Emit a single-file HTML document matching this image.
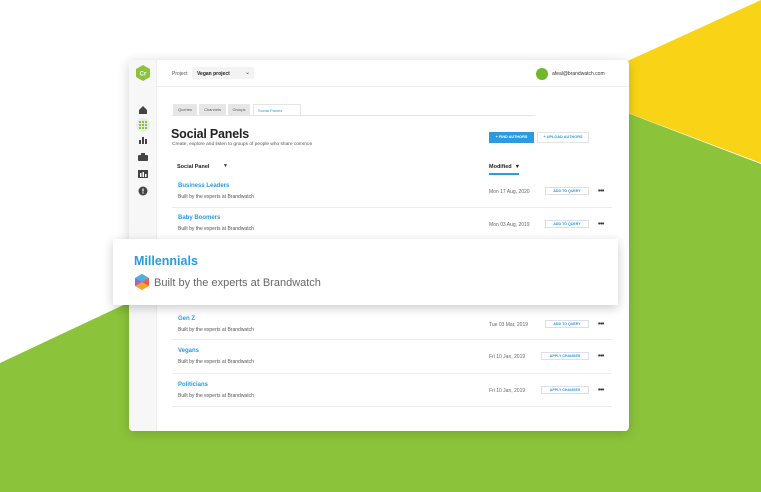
<!DOCTYPE html>
<html><head><meta charset="utf-8"><style>
*{margin:0;padding:0;box-sizing:border-box}
body{width:761px;height:492px;overflow:hidden;position:relative;background:#fff;font-family:"Liberation Sans",sans-serif}
.abs{position:absolute}
.card{left:129px;top:60px;width:500px;height:371px;background:#fff;border-radius:4px;box-shadow:0 2px 12px rgba(0,0,0,.18);overflow:hidden}
.side{left:0;top:0;width:28px;height:371px;background:#f7f7f7;border-right:1px solid #eee}
.hdr{left:28px;top:0;width:472px;height:27px;border-bottom:1px solid #eee}
.t{position:absolute;white-space:nowrap}
.link{color:#2a9be0;font-size:6px;font-weight:bold}
.sub{color:#555;font-size:5px}
.date{color:#666;font-size:5px}
.btn{position:absolute;height:8px;border:1px solid #dde;color:#2a9be0;font-size:3.6px;font-weight:bold;text-align:center;line-height:6px;background:#fff}
.dots{position:absolute;font-size:7px;color:#333;letter-spacing:-.5px;font-weight:bold}
.div{position:absolute;left:43px;width:440px;height:1px;background:#eee}
.tab{position:absolute;top:44px;height:11px;background:#e6e6e6;font-size:4px;color:#555;line-height:11px;text-align:center;border-radius:1px}
</style></head><body>
<svg class="abs" style="left:0;top:0" width="761" height="492">
<polygon points="761,0 575,85 575,93 761,163" fill="#f9d416"/>
<polygon points="0,363 575,93 761,164 761,492 0,492" fill="#8bc43a"/>
</svg>
<div class="abs card">
 <div class="abs side">
  <svg width="28" height="150" class="abs" style="left:0;top:0">
   <polygon points="14,5 21,9 21,17 14,21 7,17 7,9" fill="#8bc43a"/>
   <text x="14" y="15.5" font-size="6" fill="#fff" text-anchor="middle" font-family="Liberation Sans" font-weight="bold">Cr</text>
   <path d="M10,50 L14,46 L18,50 L18,54 L10,54 Z" fill="#444"/>
   <circle cx="14" cy="65" r="7" fill="#ebebeb"/>
   <g fill="#8bc43a"><rect x="10" y="61" width="2" height="2"/><rect x="13" y="61" width="2" height="2"/><rect x="16" y="61" width="2" height="2"/><rect x="10" y="64" width="2" height="2"/><rect x="13" y="64" width="2" height="2"/><rect x="16" y="64" width="2" height="2"/><rect x="10" y="67" width="2" height="2"/><rect x="13" y="67" width="2" height="2"/><rect x="16" y="67" width="2" height="2"/></g>
   <g fill="#444"><rect x="10" y="80" width="2" height="4"/><rect x="13" y="77" width="2" height="7"/><rect x="16" y="79" width="2" height="5"/>
   <rect x="9" y="95" width="10" height="6" rx="1"/><rect x="12" y="93" width="4" height="2"/>
   <rect x="9" y="110" width="10" height="8"/></g>
   <g fill="#fff"><rect x="11" y="113" width="1.5" height="4"/><rect x="13.5" y="112" width="1.5" height="5"/><rect x="16" y="114" width="1.5" height="3"/></g>
   <circle cx="14" cy="131" r="4.5" fill="#444"/><rect x="13.4" y="128.5" width="1.2" height="3" fill="#fff"/><rect x="13.4" y="132.3" width="1.2" height="1.2" fill="#fff"/>
  </svg>
 </div>
 <div class="abs hdr">
  <div class="t" style="left:15px;top:11px;font-size:5px;color:#555">Project</div>
  <div class="abs" style="left:35px;top:7px;width:62px;height:12px;background:#f3f3f3;border-radius:2px"></div>
  <div class="t" style="left:40px;top:11px;font-size:5px;color:#222;font-weight:bold">Vegan project</div>
  <div class="t" style="left:88px;top:9px;font-size:6px;color:#444">⌄</div>
  <div class="abs" style="left:379px;top:8px;width:12px;height:12px;border-radius:50%;background:#6fb82a"></div>
  <div class="t" style="left:395px;top:11px;font-size:5px;color:#333">afeal@brandwatch.com</div>
 </div>
 <div class="tab" style="left:44px;width:24px">Queries</div>
 <div class="tab" style="left:70px;width:27px">Channels</div>
 <div class="tab" style="left:99px;width:22px">Groups</div>
 <div class="abs" style="left:124px;top:44px;width:48px;height:12px;border:1px solid #e5e5e5;border-bottom:none;background:#fff;font-size:4px;color:#2a9be0;line-height:11px;padding-left:4px">Social Panels</div>
 <div class="abs" style="left:43px;top:55px;width:363px;height:1px;background:#e5e5e5"></div>
 <div class="t" style="left:42px;top:67px;font-size:12.5px;color:#222;font-weight:bold;letter-spacing:-0.2px">Social Panels</div>
 <div class="t" style="left:43px;top:82px;font-size:4.8px;color:#555">Create, explore and listen to groups of people who share common</div>
 <div class="abs" style="left:360px;top:72px;width:45px;height:11px;background:#2a9be0;color:#fff;font-size:3.8px;line-height:11px;text-align:center;font-weight:bold">+ FIND AUTHORS</div>
 <div class="abs" style="left:408px;top:72px;width:52px;height:11px;border:1px solid #e3e3e3;color:#2a9be0;font-size:3.8px;line-height:9px;text-align:center;font-weight:bold">+ UPLOAD AUTHORS</div>
 <div class="t" style="left:48px;top:104px;font-size:5.5px;color:#222;font-weight:bold">Social Panel</div>
 <div class="t" style="left:94px;top:103px;font-size:5px;color:#333">▼</div>
 <div class="t" style="left:360px;top:104px;font-size:5.5px;color:#222;font-weight:bold">Modified &nbsp;▼</div>
 <div class="abs" style="left:360px;top:113px;width:30px;height:1.5px;background:#2a9be0"></div>

 <div class="t link" style="left:49px;top:123px">Business Leaders</div>
 <div class="t sub" style="left:49px;top:134px">Built by the experts at Brandwatch</div>
 <div class="t date" style="left:360px;top:129px">Mon 17 Aug, 2020</div>
 <div class="btn" style="left:416px;top:127px;width:44px">ADD TO QUERY</div>
 <div class="dots" style="left:469px;top:128px">•••</div>
 <div class="div" style="top:147px"></div>

 <div class="t link" style="left:49px;top:155px">Baby Boomers</div>
 <div class="t sub" style="left:49px;top:166px">Built by the experts at Brandwatch</div>
 <div class="t date" style="left:360px;top:162px">Mon 03 Aug, 2019</div>
 <div class="btn" style="left:416px;top:160px;width:44px">ADD TO QUERY</div>
 <div class="dots" style="left:469px;top:161px">•••</div>

 <div class="t link" style="left:49px;top:256px">Gen Z</div>
 <div class="t sub" style="left:49px;top:267px">Built by the experts at Brandwatch</div>
 <div class="t date" style="left:360px;top:262px">Tue 03 Mar, 2019</div>
 <div class="btn" style="left:416px;top:260px;width:44px">ADD TO QUERY</div>
 <div class="dots" style="left:469px;top:261px">•••</div>
 <div class="div" style="top:279px"></div>

 <div class="t link" style="left:49px;top:288px">Vegans</div>
 <div class="t sub" style="left:49px;top:299px">Built by the experts at Brandwatch</div>
 <div class="t date" style="left:360px;top:294px">Fri 10 Jan, 2019</div>
 <div class="btn" style="left:412px;top:292px;width:48px">APPLY CHANGES</div>
 <div class="dots" style="left:469px;top:293px">•••</div>
 <div class="div" style="top:313px"></div>

 <div class="t link" style="left:49px;top:322px">Politicians</div>
 <div class="t sub" style="left:49px;top:333px">Built by the experts at Brandwatch</div>
 <div class="t date" style="left:360px;top:328px">Fri 10 Jan, 2019</div>
 <div class="btn" style="left:412px;top:326px;width:48px">APPLY CHANGES</div>
 <div class="dots" style="left:469px;top:327px">•••</div>
 <div class="div" style="top:346px"></div>
</div>
<div class="abs" style="left:113px;top:239px;width:505px;height:66px;background:#fff;box-shadow:0 3px 10px rgba(0,0,0,.2)">
 <div class="t" style="left:21px;top:15px;font-size:12.5px;color:#2a9be0;font-weight:bold">Millennials</div>
 <svg class="abs" style="left:21px;top:35px" width="16" height="17">
  <polygon points="8,0 15,4 15,12 8,16 1,12 1,4" fill="#f6a623"/>
  <polygon points="8,0 15,4 8,8 1,12 1,4" fill="#4cb0e4"/>
  <polygon points="15,4 15,12 8,8" fill="#ee5a4a"/>
  <polygon points="1,4 8,8 1,12" fill="#9b6bc9"/>
 </svg>
 <div class="t" style="left:41px;top:38px;font-size:11px;color:#666">Built by the experts at Brandwatch</div>
</div>
</body></html>
